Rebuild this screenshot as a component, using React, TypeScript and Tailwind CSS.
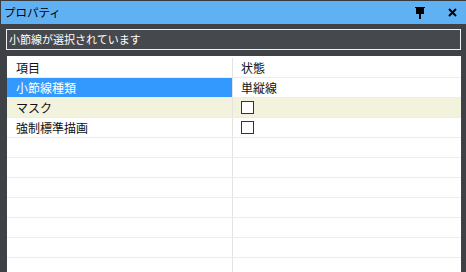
import React from "react";

const font = { fontFamily: '"Noto Sans CJK JP", "Noto Sans", sans-serif' };

function Row({ left, right, cls, leftCls }: { left: string; right?: React.ReactNode; cls?: string; leftCls?: string }) {
  return (
    <div className={`flex h-[20px] border-b border-[#ececec] ${cls ?? ""}`}>
      <div className={`w-[226px] shrink-0 border-r border-[#e3e3e3] pl-[9px] flex items-center ${leftCls ?? ""}`}>
        <span className="leading-none">{left}</span>
      </div>
      <div className="flex-1 pl-[8px] flex items-center">{right}</div>
    </div>
  );
}

const Check = () => <div className="w-[13px] h-[13px] border-[1.5px] border-[#333] bg-white" />;

export default function App() {
  return (
    <div className="w-[466px] h-[272px] bg-[#3e4246] flex flex-col text-[12px] text-[#111]" style={font}>
      <div className="h-[24px] bg-[#60b0f4] border-l border-t border-[#3a3d40] flex items-center pl-[3px] pr-[9px] shrink-0">
        <span className="text-[11.5px] text-black leading-none">プロパティ</span>
        <div className="flex-1" />
        <svg width="10" height="14" viewBox="0 0 10 14" className="mr-[23px]">
          <rect x="1" y="1" width="8" height="7" fill="#000" />
          <rect x="0" y="1" width="10" height="1" fill="#000" />
          <rect x="4" y="8" width="2" height="5" fill="#000" />
        </svg>
        <svg width="9" height="9" viewBox="0 0 9 9">
          <path d="M1 1 L8 8 M8 1 L1 8" stroke="#000" strokeWidth="2" />
        </svg>
      </div>
      <div className="flex-1 flex flex-col pl-[6px] pr-[5px] pt-[5px] pb-[4px]">
        <div className="h-[21px] border border-[#f0f0f0] bg-[#45494d] text-white flex items-center pl-[2px] shrink-0">
          <span className="leading-none text-[11px]">小節線が選択されています</span>
        </div>
        <div className="mt-[2px] flex-1 bg-white border-t-[4px] border-l border-[#3e4246] pt-[2px] overflow-hidden">
          <Row left="項目" right={<span className="leading-none">状態</span>} />
          <Row left="小節線種類" leftCls="bg-[#3399ff] text-white" right={<span className="leading-none">単縦線</span>} />
          <Row left="マスク" cls="bg-[#f3f2dd]" right={<Check />} />
          <Row left="強制標準描画" right={<Check />} />
          <Row left="" />
          <Row left="" />
          <Row left="" />
          <Row left="" />
          <Row left="" />
          <Row left="" />
          <Row left="" />
        </div>
      </div>
    </div>
  );
}
